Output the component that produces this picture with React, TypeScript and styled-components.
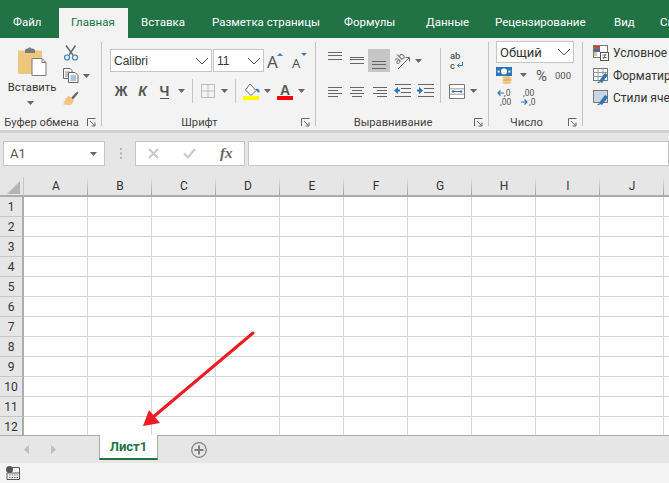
import { ReactNode } from "react";
import styled, { createGlobalStyle } from "styled-components";

const GlobalStyle = createGlobalStyle`
  html, body {
    margin: 0;
    padding: 0;
    overflow: hidden;
    background: #fff;
  }
`;

const UI_FONT = `Roboto, "Noto Sans", sans-serif`;
const GREEN = "#217346";

const Page = styled.div`
  position: relative;
  width: 669px;
  height: 483px;
  overflow: hidden;
  display: flex;
  flex-direction: column;
  font-family: ${UI_FONT};
  font-size: 12px;
  color: #333;
`;

/* tabs */

const TabBar = styled.nav`
  flex: none;
  height: 38px;
  background: ${GREEN};
  display: flex;
  align-items: flex-end;
  white-space: nowrap;
`;

const MenuTab = styled.div<{ $w: number; $active?: boolean }>`
  flex: none;
  width: ${(p) => p.$w}px;
  height: 30px;
  display: flex;
  align-items: center;
  padding: 0 0 2px ${(p) => (p.$active ? 12 : 13)}px;
  box-sizing: border-box;
  font-size: 11.5px;
  color: ${(p) => (p.$active ? GREEN : "#fff")};
  background: ${(p) => (p.$active ? "#f3f3f3" : "transparent")};
`;

/* ribbon */

const Ribbon = styled.div`
  flex: none;
  height: 92px;
  background: #f3f3f3;
  border-bottom: 3px solid #d2d2d2;
  display: flex;
`;

const Group = styled.section<{ $w: number; $pad?: number; $open?: boolean }>`
  flex: none;
  position: relative;
  box-sizing: border-box;
  width: ${(p) => p.$w}px;
  padding-left: ${(p) => p.$pad ?? 0}px;
  display: flex;
  flex-direction: column;
  &::after {
    content: "";
    display: ${(p) => (p.$open ? "none" : "block")};
    position: absolute;
    right: 0;
    top: 4px;
    bottom: 4px;
    width: 1px;
    background: #c4c4c4;
  }
`;

const GroupBody = styled.div<{ $top?: number }>`
  flex: none;
  height: 76px;
  box-sizing: border-box;
  padding-top: ${(p) => p.$top ?? 0}px;
  display: flex;
  flex-direction: column;
`;

const BodyColumns = styled.div`
  flex: none;
  height: 76px;
  display: flex;
`;

const Footer = styled.div<{ $pad?: number }>`
  flex: none;
  height: 16px;
  display: flex;
  align-items: center;
  margin-left: ${(p) => -(p.$pad ?? 0)}px;
  padding-right: 3px;
  box-sizing: border-box;
`;

const GroupLabel = styled.div`
  flex: 1;
  text-align: center;
  font-size: 11.2px;
  line-height: 16px;
  padding-top: 1px;
  white-space: nowrap;
  color: #444;
`;

const Launcher = styled.div`
  flex: none;
  width: 16px;
  display: flex;
  justify-content: center;
`;

const Row = styled.div<{ $h?: number; $mt?: number }>`
  flex: none;
  display: flex;
  align-items: center;
  height: ${(p) => p.$h ?? 23}px;
  margin-top: ${(p) => p.$mt ?? 0}px;
`;

const Slot = styled.div<{ $w: number; $h?: number; $on?: boolean }>`
  flex: none;
  width: ${(p) => p.$w}px;
  height: ${(p) => p.$h ?? 23}px;
  display: flex;
  align-items: center;
  justify-content: center;
  background: ${(p) => (p.$on ? "#c6c6c6" : "transparent")};
`;

const Divider = styled.div`
  width: 1px;
  height: 24px;
  background: #c6c6c6;
`;

const TallDivider = styled.div`
  flex: none;
  width: 1px;
  height: 55px;
  margin: 10px 7px 0 3px;
  background: #c6c6c6;
`;

const Combo = styled.div<{ $w: number; $h?: number; $font?: string; $size?: number }>`
  flex: none;
  box-sizing: border-box;
  width: ${(p) => p.$w}px;
  height: ${(p) => p.$h ?? 23}px;
  margin-right: 1px;
  padding: 0 2px 0 3px;
  background: #fff;
  border: 1px solid #c6c6c6;
  display: flex;
  align-items: center;
  justify-content: space-between;
  font-family: ${(p) => p.$font ?? UI_FONT};
  font-size: ${(p) => p.$size ?? 12}px;
  color: #333;
`;

const PasteColumn = styled.div`
  flex: none;
  width: 62px;
  padding-top: 8px;
  box-sizing: border-box;
  display: flex;
  flex-direction: column;
  align-items: center;
`;

const PasteLabel = styled.div`
  margin-top: 4px;
  padding-left: 2px;
  line-height: 16px;
  font-size: 11.2px;
  color: #333;
`;

const PasteCaret = styled.div`
  margin-top: 5px;
  padding-right: 2px;
  line-height: 0;
`;

const SideColumn = styled.div`
  flex: none;
  display: flex;
  flex-direction: column;
  padding-top: 3px;
`;

const GlyphBold = styled.span<{ $italic?: boolean; $under?: boolean }>`
  font-family: "Liberation Sans", sans-serif;
  font-weight: 700;
  font-size: 14px;
  color: #555;
  font-style: ${(p) => (p.$italic ? "italic" : "normal")};
  border-bottom: ${(p) => (p.$under ? "1px solid #555" : "none")};
  line-height: 14px;
`;

const StyleRow = styled.div`
  flex: none;
  height: 22.5px;
  display: flex;
  align-items: center;
  gap: 4px;
  white-space: nowrap;
`;

/* formula bar */

const FormulaBar = styled.div`
  flex: none;
  height: 44px;
  box-sizing: border-box;
  padding: 8px 0 11px 3px;
  background: #e6e6e6;
  display: flex;
  align-items: stretch;
`;

const FieldBox = styled.div<{ $w?: number }>`
  flex: ${(p) => (p.$w ? "none" : "1")};
  width: ${(p) => (p.$w ? `${p.$w}px` : "auto")};
  box-sizing: border-box;
  background: #fff;
  border: 1px solid #c6c6c6;
  display: flex;
  align-items: center;
`;

const NameBox = styled(FieldBox)`
  justify-content: space-between;
  padding: 0 7px 0 6px;
  font-size: 13px;
  color: #555;
`;

const Grip = styled.div`
  flex: none;
  width: 30px;
  display: flex;
  align-items: center;
  justify-content: center;
`;

const FxBox = styled(FieldBox)`
  margin-right: 3px;
  padding-left: 12px;
  gap: 24px;
`;

const Fx = styled.span`
  font-family: "Liberation Serif", serif;
  font-style: italic;
  font-weight: 700;
  font-size: 15px;
  color: #666;
`;

/* sheet */

const Sheet = styled.div`
  flex: none;
  height: 258px;
  overflow: hidden;
  background: #fff;
  display: grid;
  grid-template-columns: 24px repeat(11, 64px);
  grid-auto-rows: 20px;
`;

const Corner = styled.div`
  background: #e6e6e6;
  border-right: 1px solid #c6c6c6;
  border-bottom: 2px solid #ababab;
  box-sizing: border-box;
  display: flex;
  align-items: flex-end;
  justify-content: flex-end;
  padding: 0 3px 1px 0;
`;

const ColHead = styled.div`
  position: relative;
  background: #e6e6e6;
  border-bottom: 2px solid #ababab;
  box-sizing: border-box;
  display: flex;
  align-items: center;
  justify-content: center;
  font-size: 12px;
  color: #333;
  &::after {
    content: "";
    position: absolute;
    right: 0;
    top: 0;
    bottom: 0;
    width: 1px;
    background: linear-gradient(#e6e6e6, #a0a0a0);
  }
`;

const RowHead = styled.div`
  background: #e6e6e6;
  border-right: 2px solid #ababab;
  border-bottom: 1px solid #c6c6c6;
  box-sizing: border-box;
  display: flex;
  align-items: center;
  justify-content: center;
  font-size: 12px;
  color: #333;
`;

const Cell = styled.div`
  background: #fff;
  border-right: 1px solid #d4d4d4;
  border-bottom: 1px solid #d4d4d4;
  box-sizing: border-box;
`;

/* bottom bars */

const SheetBar = styled.div`
  flex: none;
  height: 28px;
  box-sizing: border-box;
  background: #e6e6e6;
  border-top: 1px solid #ababab;
  display: flex;
  align-items: flex-start;
`;

const NavArrows = styled.div`
  flex: none;
  width: 99px;
  height: 27px;
  box-sizing: border-box;
  padding-left: 24px;
  display: flex;
  align-items: center;
  gap: 22px;
`;

const SheetTab = styled.div`
  flex: none;
  width: 59px;
  height: 25px;
  margin-top: -1px;
  box-sizing: border-box;
  background: #fff;
  border-left: 1px solid #ababab;
  border-right: 1px solid #ababab;
  border-bottom: 2px solid ${GREEN};
  display: flex;
  align-items: center;
  justify-content: center;
  font-weight: 700;
  font-size: 13px;
  color: ${GREEN};
`;

const AddSheet = styled.div`
  flex: none;
  margin-left: 33px;
  height: 27px;
  display: flex;
  align-items: center;
`;

const StatusBar = styled.footer`
  flex: none;
  height: 20px;
  box-sizing: border-box;
  padding-left: 6px;
  background: #f3f3f3;
  display: flex;
  align-items: center;
`;

const ArrowOverlay = styled.svg`
  position: absolute;
  left: 0;
  top: 0;
  pointer-events: none;
`;

/* drawn icons */

const IconSvg = styled.svg`
  display: block;
  flex: none;
  overflow: visible;
`;

const Ico = ({ w, h, children }: { w: number; h: number; children: ReactNode }) => (
  <IconSvg width={w} height={h} viewBox={`0 0 ${w} ${h}`}>
    {children}
  </IconSvg>
);

const Caret = () => (
  <Ico w={7} h={4}>
    <path d="M0 0H7L3.5 4Z" fill="#666" />
  </Ico>
);

const Chevron = () => (
  <Ico w={14} h={8}>
    <path d="M1 1L7 7L13 1" fill="none" stroke="#555" strokeWidth="1" />
  </Ico>
);

const LaunchIcon = () => (
  <Ico w={9} h={9}>
    <path d="M.5 8V.5H8.5M3 3L7.5 7.5M8 4.5V8H4.5" fill="none" stroke="#666" strokeWidth="1" />
  </Ico>
);

const Lines = ({ rows }: { rows: [number, number, number][] }) => (
  <Ico w={22} h={23}>
    {rows.map(([x1, x2, y], i) => (
      <rect key={i} x={x1} y={y} width={x2 - x1} height={1} fill="#666" />
    ))}
  </Ico>
);

const PasteIcon = () => (
  <Ico w={30} h={30}>
    <path d="M2 4.500H26V26a2 2 0 0 1-2 2H4a2 2 0 0 1-2-2Z" fill="#efc67e" />
    <path d="M9 4.500C9 3 11 2.500 12 2.500C12.500 1 15 1 15.500 2.500C17 2.500 19 3 19 4.500V7H9Z" fill="#7b7b7b" />
    <path d="M16 12.500H26L30 16.500V29.500H16Z" fill="#fff" stroke="#7b7b7b" />
    <path d="M26 12.500V16.500H30" fill="none" stroke="#7b7b7b" />
  </Ico>
);

const Scissors = () => (
  <Ico w={16} h={16}>
    <path d="M3 0.500L10 10M12.500 0.500L6 10" stroke="#6a6a6a" strokeWidth="1.500" fill="none" />
    <circle cx="4" cy="12.500" r="2.500" fill="none" stroke="#3c7fbf" strokeWidth="1.200" />
    <circle cx="12" cy="12.500" r="2.500" fill="none" stroke="#3c7fbf" strokeWidth="1.200" />
  </Ico>
);

const CopyIcon = () => (
  <Ico w={16} h={15}>
    <path d="M.5.500H7L9 2.500V10.500H.5Z" fill="#fff" stroke="#666" />
    <path d="M2 4H7M2 6H7M2 8H5" stroke="#666" strokeWidth=".8" />
    <path d="M5.500 4.500H12L15 7.500V14.500H5.500Z" fill="#fff" stroke="#666" />
    <path d="M7.500 8H13M7.500 10H13M7.500 12H13" stroke="#3c7fbf" strokeWidth=".9" />
  </Ico>
);

const BrushIcon = () => (
  <Ico w={17} h={15}>
    <path d="M9 7L13 2.500L15.500 0.500L16.500 1.500L14.500 4.500L11 8.500Z" fill="#6a6a6a" />
    <path d="M7 4.500L12 9.500L9 14L1 13.500L3 11.500L1 11L4 9L3 8Z" fill="#efc67e" />
  </Ico>
);

const GrowFont = ({ up }: { up: boolean }) => (
  <Ico w={18} h={18}>
    <text x={up ? 0 : 2} y={16} fontFamily="Noto Sans, sans-serif" fontSize={up ? 17 : 13} fill="#555">
      A
    </text>
    <path d={up ? "M10 4L13 1L16 4Z" : "M11 1H17L14 4Z"} fill="#3c7fbf" />
  </Ico>
);

const BorderIcon = () => (
  <Ico w={14} h={14}>
    <path
      d="M.5 .5H13.500V13.500H.5ZM7 .5V13.500M.5 7H13.500"
      fill="none"
      stroke="#888"
      strokeDasharray="1 1"
    />
  </Ico>
);

const FillIcon = () => (
  <Ico w={17} h={17}>
    <path d="M7 1L13 7.500L8 12.500L2.500 7Z" fill="#fff" stroke="#666" />
    <path d="M12.500 6C15.500 5 17 7 16.500 9.500C15 10 13.500 8 12.500 6Z" fill="#3c7fbf" />
    <rect x={0} y={13} width={16} height={4} fill="#ffff00" />
  </Ico>
);

const ColorA = () => (
  <Ico w={16} h={17}>
    <text x={3} y={12} fontFamily="Liberation Sans, sans-serif" fontSize={14} fontWeight="700" fill="#555">
      A
    </text>
    <rect x={0} y={13} width={16} height={4} fill="#ff0000" />
  </Ico>
);

const Orientation = () => (
  <Ico w={18} h={19}>
    <text
      x={1}
      y={11}
      fontFamily="Noto Sans, sans-serif"
      fontSize={10}
      fill="#666"
      transform="rotate(-45 6 8)"
    >
      ab
    </text>
    <path d="M5 18L16 7M12.500 6.500H16.500V10.500" fill="none" stroke="#666" strokeWidth="1" />
  </Ico>
);

const IndentIcon = ({ dir }: { dir: "in" | "out" }) => (
  <Ico w={18} h={14}>
    <path d="M1 .5H17M7 4.500H17M7 8.500H17M1 12.500H17" stroke="#666" strokeWidth="1" />
    <path
      d={dir === "out" ? "M0 6.500L4 3V5.500H6V7.500H4V10Z" : "M6 6.500L2 3V5.500H0V7.500H2V10Z"}
      fill="#2e75b6"
    />
  </Ico>
);

const WrapIcon = () => (
  <Ico w={14} h={16}>
    <text x={0} y={6} fontFamily="Roboto, sans-serif" fontSize={9.500} fontWeight="500" fill="#555">
      ab
    </text>
    <text x={0} y={15.500} fontFamily="Roboto, sans-serif" fontSize={9.500} fontWeight="500" fill="#555">
      c
    </text>
    <path d="M12.500 9V12.500H8M9.500 10.500L7.500 12.500L9.500 14.500" fill="none" stroke="#2e75b6" />
  </Ico>
);

const MergeIcon = () => (
  <Ico w={16} h={15}>
    <path d="M.5 .5H15.500V14.500H.5ZM.5 5H15.500M.5 10H15.500" fill="#fff" stroke="#777" />
    <rect x={1} y={5.500} width={14} height={4} fill="#fff" />
    <path d="M3 7.500H13M4.500 6L3 7.500L4.500 9M11.500 6L13 7.500L11.500 9" fill="none" stroke="#2e75b6" />
  </Ico>
);

const MoneyIcon = () => (
  <Ico w={17} h={17}>
    <rect x={0} y={0} width={16} height={9} fill="#2e75b6" />
    <ellipse cx={8} cy={4.500} rx={3} ry={3} fill="#fff" />
    <rect x={1.500} y={3.500} width={2} height={2} fill="#fff" />
    <rect x={12.500} y={3.500} width={2} height={2} fill="#fff" />
    <ellipse cx={11} cy={10.500} rx={4.500} ry={1.500} fill="#efc67e" />
    <ellipse cx={11} cy={13} rx={4.500} ry={1.500} fill="#e8b65c" />
    <ellipse cx={11} cy={15.500} rx={4.500} ry={1.500} fill="#efc67e" />
  </Ico>
);

const DecimalIcon = ({ grow }: { grow: boolean }) => (
  <Ico w={17} h={18}>
    <text x={grow ? 6 : 3} y={8} fontFamily="Roboto, sans-serif" fontSize={8.500} fill="#555">
      {grow ? ",0" : ",00"}
    </text>
    <text x={grow ? 2 : 9} y={17} fontFamily="Roboto, sans-serif" fontSize={8.500} fill="#555">
      {grow ? ",00" : ",0"}
    </text>
    <path
      d={grow ? "M0 5H6M2.500 2.500L0 5L2.500 7.500" : "M1 14H7M4.500 11.500L7 14L4.500 16.500"}
      fill="none"
      stroke="#2e75b6"
      strokeWidth="1.200"
    />
  </Ico>
);

const StyleIcon = ({ kind }: { kind: "cond" | "table" | "cell" }) => (
  <Ico w={16} h={16}>
    <rect x={.5} y={.5} width={14} height={12} fill="#fff" stroke="#777" />
    {kind === "cond" && (
      <>
        <rect x={1} y={1} width={6} height={3} fill="#d24726" />
        <rect x={1} y={4} width={6} height={3} fill="#2e75b6" />
        <rect x={1} y={7} width={3} height={4} fill="#efc67e" />
        <rect x={7.500} y={7.500} width={8} height={8} fill="#fff" stroke="#555" />
        <path d="M9.500 10H13.500M9.500 12.500H13.500M12.500 9L10.500 14" stroke="#555" strokeWidth=".8" />
      </>
    )}
    {kind !== "cond" && (
      <>
        {kind === "table" && <path d="M5 .5V12.500M10 .5V12.500M.5 4.500H14.500M.5 8.500H14.500" stroke="#999" />}
        {kind === "cell" && <rect x={1} y={1} width={13} height={11} fill="#c9d6e6" />}
        <path d="M9 15L15 7L12 5L6 13Z" fill="#2e75b6" />
        <path d="M4 15.500C5 13 7 13 8 14Z" fill="#555" />
      </>
    )}
  </Ico>
);

const CancelIcon = () => (
  <Ico w={11} h={11}>
    <path d="M1 1L10 10M10 1L1 10" stroke="#c8c8c8" strokeWidth="1.800" />
  </Ico>
);

const EnterIcon = () => (
  <Ico w={13} h={11}>
    <path d="M1 5.500L5 9.500L12 1" fill="none" stroke="#c8c8c8" strokeWidth="2" />
  </Ico>
);

const GripIcon = () => (
  <Ico w={3} h={11}>
    <path d="M1 0H3V2H1ZM1 4.500H3V6.500H1ZM1 9H3V11H1Z" fill="#b4b4b4" />
  </Ico>
);

const CornerTriangle = () => (
  <Ico w={13} h={13}>
    <path d="M13 0V13H0Z" fill="#b5b5b5" />
  </Ico>
);

const NavArrow = ({ right }: { right?: boolean }) => (
  <Ico w={5} h={9}>
    <path d={right ? "M0 0L5 4.500L0 9Z" : "M5 0L0 4.500L5 9Z"} fill="#bdbdbd" />
  </Ico>
);

const PlusCircle = () => (
  <Ico w={16} h={16}>
    <circle cx={8} cy={8} r={7.300} fill="none" stroke="#808080" strokeWidth="1.200" />
    <path d="M8 3.500V12.500M3.500 8H12.500" stroke="#808080" strokeWidth="2" />
  </Ico>
);

const MacroIcon = () => (
  <Ico w={14} h={14}>
    <circle cx={3.500} cy={3.500} r={3.500} fill="#555" />
    <path d="M1 7H13.500V13.500H1Z" fill="#fff" stroke="#555" />
    <path d="M5 1.500H13.500V7" fill="none" stroke="#555" />
    <path d="M3 9H12M3 11.500H12" stroke="#555" strokeDasharray="1.500 1" />
  </Ico>
);

const MENU: [string, number, boolean?][] = [
  ["Файл", 59],
  ["Главная", 69, true],
  ["Вставка", 71],
  ["Разметка страницы", 132],
  ["Формулы", 82],
  ["Данные", 69],
  ["Рецензирование", 119],
  ["Вид", 46],
  ["Справка", 60],
];

const COLUMNS = ["A", "B", "C", "D", "E", "F", "G", "H", "I", "J", "K"];
const ROWS = Array.from({ length: 13 }, (_, i) => i + 1);

const VTOP: [number, number, number][] = [[4, 18, 3], [4, 18, 6], [4, 18, 10]];
const VMID: [number, number, number][] = [[4, 18, 8], [4, 18, 10], [4, 18, 14]];
const VBOT: [number, number, number][] = [[4, 18, 12], [4, 18, 15], [4, 18, 19]];
const HLEFT: [number, number, number][] = [[4, 18, 7], [4, 14, 10], [4, 18, 13], [4, 14, 16]];
const HMID: [number, number, number][] = [[4, 18, 7], [6, 16, 10], [4, 18, 13], [6, 16, 16]];
const HRIGHT: [number, number, number][] = [[4, 18, 7], [8, 18, 10], [4, 18, 13], [8, 18, 16]];

function App() {
  return (
    <Page>
      <GlobalStyle />
      <TabBar>
        {MENU.map(([label, w, active]) => (
          <MenuTab key={label} $w={w} $active={active}>
            {label}
          </MenuTab>
        ))}
      </TabBar>

      <Ribbon>
        <Group $w={102}>
          <BodyColumns>
            <PasteColumn>
              <PasteIcon />
              <PasteLabel>Вставить</PasteLabel>
              <PasteCaret>
                <Caret />
              </PasteCaret>
            </PasteColumn>
            <SideColumn>
              <Slot $w={17}>
                <Scissors />
              </Slot>
              <Row>
                <Slot $w={17}>
                  <CopyIcon />
                </Slot>
                <Slot $w={14}>
                  <Caret />
                </Slot>
              </Row>
              <Slot $w={17}>
                <BrushIcon />
              </Slot>
            </SideColumn>
          </BodyColumns>
          <Footer>
            <GroupLabel>Буфер обмена</GroupLabel>
            <Launcher>
              <LaunchIcon />
            </Launcher>
          </Footer>
        </Group>

        <Group $w={214} $pad={8}>
          <GroupBody $top={11}>
            <Row>
              <Combo $w={102} $font={`"Liberation Sans", sans-serif`}>
                Calibri
                <Chevron />
              </Combo>
              <Combo $w={51} $font={`"Liberation Sans", sans-serif`}>
                11
                <Chevron />
              </Combo>
              <Slot $w={22}>
                <GrowFont up />
              </Slot>
              <Slot $w={23}>
                <GrowFont up={false} />
              </Slot>
            </Row>
            <Row $h={24} $mt={7}>
              <Slot $w={22}>
                <GlyphBold>Ж</GlyphBold>
              </Slot>
              <Slot $w={21}>
                <GlyphBold $italic>К</GlyphBold>
              </Slot>
              <Slot $w={23}>
                <GlyphBold $under>Ч</GlyphBold>
              </Slot>
              <Slot $w={11}>
                <Caret />
              </Slot>
              <Slot $w={10}>
                <Divider />
              </Slot>
              <Slot $w={21}>
                <BorderIcon />
              </Slot>
              <Slot $w={12}>
                <Caret />
              </Slot>
              <Slot $w={10}>
                <Divider />
              </Slot>
              <Slot $w={22}>
                <FillIcon />
              </Slot>
              <Slot $w={11}>
                <Caret />
              </Slot>
              <Slot $w={23}>
                <ColorA />
              </Slot>
              <Slot $w={11}>
                <Caret />
              </Slot>
            </Row>
          </GroupBody>
          <Footer $pad={8}>
            <GroupLabel>Шрифт</GroupLabel>
            <Launcher>
              <LaunchIcon />
            </Launcher>
          </Footer>
        </Group>

        <Group $w={173} $pad={8}>
          <BodyColumns>
            <div>
              <Row $mt={11}>
                <Slot $w={22}>
                  <Lines rows={VTOP} />
                </Slot>
                <Slot $w={22}>
                  <Lines rows={VMID} />
                </Slot>
                <Slot $w={22} $on>
                  <Lines rows={VBOT} />
                </Slot>
                <Slot $w={23}>
                  <Orientation />
                </Slot>
                <Slot $w={10}>
                  <Caret />
                </Slot>
              </Row>
              <Row $h={24} $mt={7}>
                <Slot $w={22}>
                  <Lines rows={HLEFT} />
                </Slot>
                <Slot $w={22}>
                  <Lines rows={HMID} />
                </Slot>
                <Slot $w={23}>
                  <Lines rows={HRIGHT} />
                </Slot>
                <Slot $w={23}>
                  <IndentIcon dir="out" />
                </Slot>
                <Slot $w={23}>
                  <IndentIcon dir="in" />
                </Slot>
              </Row>
            </div>
            <TallDivider />
            <div>
              <Row $mt={11}>
                <Slot $w={17}>
                  <WrapIcon />
                </Slot>
              </Row>
              <Row $h={24} $mt={7}>
                <Slot $w={17}>
                  <MergeIcon />
                </Slot>
                <Slot $w={16}>
                  <Caret />
                </Slot>
              </Row>
            </div>
          </BodyColumns>
          <Footer $pad={8}>
            <GroupLabel>Выравнивание</GroupLabel>
            <Launcher>
              <LaunchIcon />
            </Launcher>
          </Footer>
        </Group>

        <Group $w={94} $pad={7}>
          <GroupBody $top={3}>
            <Combo $w={78} $h={22} $size={13}>
              Общий
              <Chevron />
            </Combo>
            <Row $h={22} $mt={1}>
              <Slot $w={17} $h={22}>
                <MoneyIcon />
              </Slot>
              <Slot $w={20} $h={22}>
                <Caret />
              </Slot>
              <Slot $w={19} $h={22}>
                <Ico w={14} h={14}>
                  <text x={0} y={13} fontFamily="Roboto, sans-serif" fontSize={15} fill="#555">
                    %
                  </text>
                </Ico>
              </Slot>
              <Slot $w={22} $h={22}>
                <Ico w={16} h={12}>
                  <text x={0} y={10} fontFamily="Roboto, sans-serif" fontSize={9.500} fill="#555">
                    000
                  </text>
                </Ico>
              </Slot>
            </Row>
            <Row $h={22}>
              <Slot $w={21} $h={22}>
                <DecimalIcon grow />
              </Slot>
              <Slot $w={22} $h={22}>
                <DecimalIcon grow={false} />
              </Slot>
            </Row>
          </GroupBody>
          <Footer $pad={7}>
            <GroupLabel>Число</GroupLabel>
            <Launcher>
              <LaunchIcon />
            </Launcher>
          </Footer>
        </Group>

        <Group $w={100} $pad={10} $open>
          <GroupBody $top={4}>
            <StyleRow>
              <StyleIcon kind="cond" />
              Условное форматирование
            </StyleRow>
            <StyleRow>
              <StyleIcon kind="table" />
              Форматировать как таблицу
            </StyleRow>
            <StyleRow>
              <StyleIcon kind="cell" />
              Стили ячеек
            </StyleRow>
          </GroupBody>
        </Group>
      </Ribbon>

      <FormulaBar>
        <NameBox $w={102}>
          A1
          <Caret />
        </NameBox>
        <Grip>
          <GripIcon />
        </Grip>
        <FxBox $w={110}>
          <CancelIcon />
          <EnterIcon />
          <Fx>fx</Fx>
        </FxBox>
        <FieldBox />
      </FormulaBar>

      <Sheet>
        <Corner>
          <CornerTriangle />
        </Corner>
        {COLUMNS.map((c) => (
          <ColHead key={c}>{c}</ColHead>
        ))}
        {ROWS.map((r) => [
          <RowHead key={`h${r}`}>{r}</RowHead>,
          ...COLUMNS.map((c) => <Cell key={`${c}${r}`} />),
        ])}
      </Sheet>

      <SheetBar>
        <NavArrows>
          <NavArrow />
          <NavArrow right />
        </NavArrows>
        <SheetTab>Лист1</SheetTab>
        <AddSheet>
          <PlusCircle />
        </AddSheet>
      </SheetBar>

      <StatusBar>
        <MacroIcon />
      </StatusBar>

      <ArrowOverlay width={669} height={483} viewBox="0 0 669 483">
        <path d="M253 333L152 418" stroke="#ed1c24" strokeWidth="3" strokeLinecap="round" />
        <path d="M143 426L149 410L160 423Z" fill="#ed1c24" />
      </ArrowOverlay>
    </Page>
  );
}

export default App;
